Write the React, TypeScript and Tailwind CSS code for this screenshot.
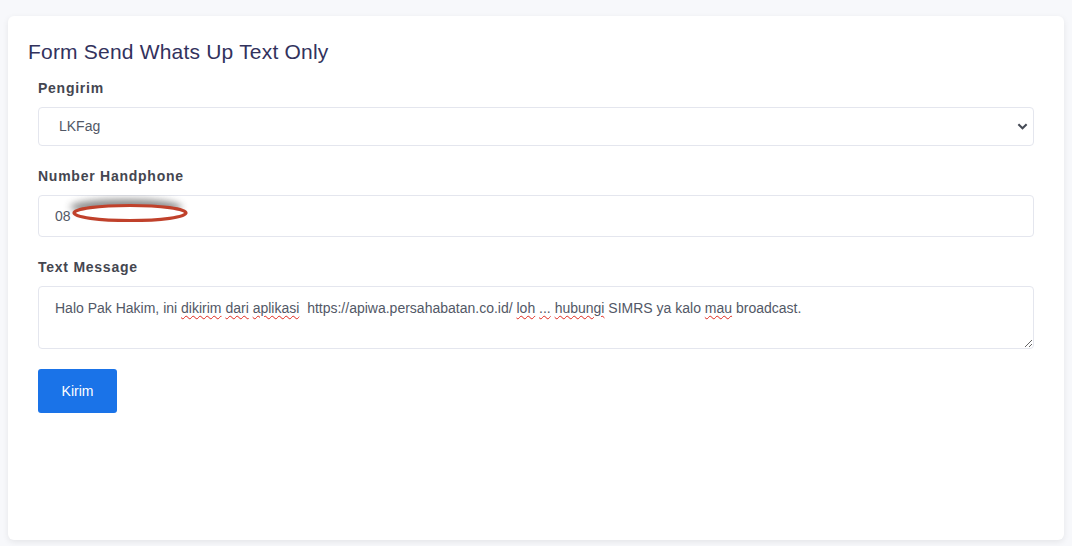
import React, { useState } from 'react';

const Typo: React.FC<{ children: React.ReactNode }> = ({ children }) => (
  <span className="underline decoration-wavy decoration-[#e0281d] decoration-1 underline-offset-[2px]">{children}</span>
);

const App: React.FC = () => {
  const [sender, setSender] = useState('LKFag');
  const [phone, setPhone] = useState('08');

  return (
    <div className="min-h-[546px] bg-[#f7f8fb] px-2 pt-4 pb-[6px] font-['Liberation_Sans',Arial,sans-serif]">
      <div className="bg-white rounded-md shadow-[0_2px_6px_rgba(0,0,0,0.08)] min-h-[524px] px-5 pt-[24px]">
        <h2 className="text-[21px] text-[#32325d] tracking-[0.2px] leading-6">Form Send Whats Up Text Only</h2>

        <form className="px-[10px] pt-[16px]" onSubmit={(e) => e.preventDefault()}>
          {/* Pengirim */}
          <label className="block text-[14px] font-bold text-[#444650] tracking-[0.75px] leading-4 mb-[11px]">Pengirim</label>
          <div className="relative mb-[22px]">
            <select
              value={sender}
              onChange={(e) => setSender(e.target.value)}
              className="w-full h-[39px] appearance-none rounded border border-[#e4e6ee] bg-white pl-5 pr-8 text-[14px] text-[#525866] outline-none"
            >
              <option value="LKFag">LKFag</option>
            </select>
            <svg className="absolute right-[6px] top-[15px] h-[9px] w-[11px] pointer-events-none" viewBox="0 0 12 9">
              <path d="M1.5 2L6 6.5L10.5 2" stroke="#454a55" strokeWidth="2.2" fill="none" />
            </svg>
          </div>

          {/* Number Handphone */}
          <label className="block text-[14px] font-bold text-[#444650] tracking-[0.75px] leading-4 mb-[11px]">Number Handphone</label>
          <div className="relative mb-[22px]">
            <input
              type="text"
              value={phone}
              onChange={(e) => setPhone(e.target.value)}
              className="w-full h-[42px] rounded border border-[#e4e6ee] bg-white px-4 text-[14px] text-[#525866] outline-none"
            />
            {/* redaction mark */}
            <svg className="absolute left-[14px] top-0 h-[36px] w-[160px] pointer-events-none" viewBox="0 0 160 36">
              <defs>
                <filter id="blur" x="-20%" y="-60%" width="140%" height="220%">
                  <feGaussianBlur stdDeviation="3.5" />
                </filter>
              </defs>
              <ellipse cx="74" cy="12" rx="56" ry="8" fill="#444" opacity="0.6" filter="url(#blur)" />
              <ellipse cx="78" cy="18" rx="56" ry="7.5" fill="white" stroke="#c0412b" strokeWidth="3.2" />
            </svg>
          </div>

          {/* Text Message */}
          <label className="block text-[14px] font-bold text-[#444650] tracking-[0.75px] leading-4 mb-[11px]">Text Message</label>
          <div className="h-[63px] w-full resize-y overflow-auto rounded border border-[#e4e6ee] bg-white px-4 pt-[12px] text-[14px] leading-[18px] text-[#525866]">
            Halo Pak Hakim, ini <Typo>dikirim</Typo> <Typo>dari</Typo> <Typo>aplikasi</Typo>{'\u00a0 '}https://apiwa.persahabatan.co.id/ <Typo>loh</Typo> <Typo>...</Typo> <Typo>hubungi</Typo> SIMRS ya kalo <Typo>mau</Typo> broadcast.
          </div>

          <button
            type="submit"
            className="mt-5 h-[44px] w-[79px] rounded-[3px] bg-[#1a73e8] text-[14px] text-white"
          >
            Kirim
          </button>
        </form>
      </div>
    </div>
  );
};

export default App;
